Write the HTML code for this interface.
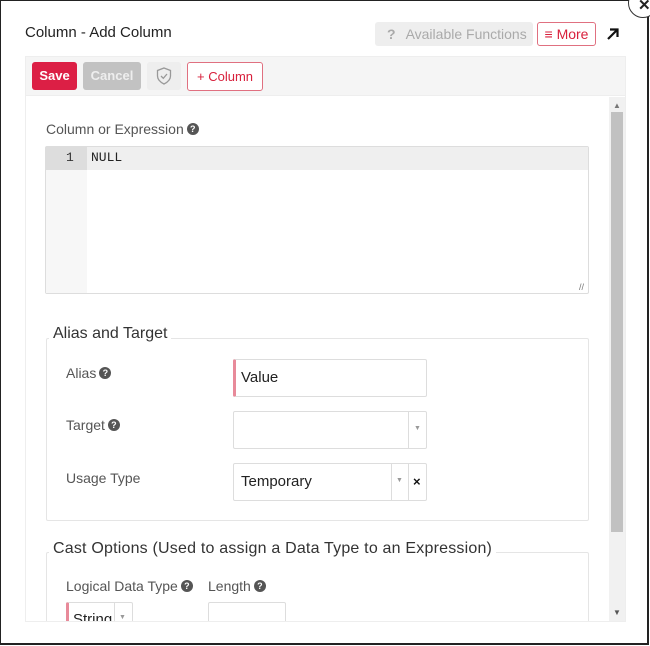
<!DOCTYPE html>
<html><head><style>
*{box-sizing:border-box;margin:0;padding:0}
body{width:650px;height:646px;overflow:hidden;background:#fff;font-family:"Liberation Sans",sans-serif;position:relative}
.a{position:absolute}
.frame{left:0;top:0;width:649px;height:645px;border:1px solid #222;border-right-width:2px;border-bottom-width:2px}
.lbl{color:#555;font-size:14px}
.q{display:inline-block;width:12px;height:12px;border-radius:50%;background:#555;color:#fff;font-size:9px;font-weight:bold;text-align:center;line-height:12px;vertical-align:2px;margin-left:3px}
.inp{border:1px solid #ddd;border-radius:2px;background:#fff}
.leg{background:#fff;padding:0 4px;font-size:16px;color:#333}
</style></head><body>
<div class="a frame"></div>
<div class="a" style="left:628px;top:-12px;width:30px;height:30px;border:1.5px solid #333;border-radius:50%;background:#fff"></div>
<div class="a" style="left:638px;top:-4px;font-size:15px;font-weight:bold;color:#222">✕</div>

<div class="a" style="left:25px;top:24px;font-size:15px;color:#222">Column - Add Column</div>
<div class="a" style="left:375px;top:22px;width:158px;height:24px;background:#eee;border-radius:3px;color:#aaa;font-size:14px;line-height:24px;padding-left:12px"><b style="margin-right:10px">?</b>Available Functions</div>
<div class="a" style="left:537px;top:22px;width:59px;height:24px;border:1px solid #e07080;border-radius:3px;color:#d8203c;font-size:14px;line-height:22px;text-align:center">≡ More</div>
<svg class="a" style="left:606px;top:27px" width="14" height="14" viewBox="0 0 14 14"><path d="M2 12L11 3M4 2.5H11.5V10" stroke="#111" stroke-width="2.2" fill="none"/></svg>

<div class="a" style="left:25px;top:56px;width:601px;height:566px;border:1px solid #eee;background:#fff"></div>
<div class="a" style="left:26px;top:57px;width:599px;height:39px;background:#f5f5f5;border-bottom:1px solid #eee"></div>
<div class="a" style="left:32px;top:62px;width:45px;height:28px;background:#dc1f45;border-radius:3px;color:#fff;font-size:13px;font-weight:bold;line-height:28px;text-align:center">Save</div>
<div class="a" style="left:83px;top:62px;width:58px;height:28px;background:#c2c2c2;border-radius:3px;color:#eee;font-size:13px;font-weight:bold;line-height:28px;text-align:center">Cancel</div>
<div class="a" style="left:147px;top:62px;width:34px;height:28px;background:#eee;border-radius:3px"></div>
<svg class="a" style="left:156px;top:67px" width="16" height="18" viewBox="0 0 16 18"><path d="M8 1L14.5 3.5V9C14.5 13 11 15.5 8 17C5 15.5 1.5 13 1.5 9V3.5Z" fill="none" stroke="#999" stroke-width="1.3"/><path d="M5 9L7.3 11.3L11 7" fill="none" stroke="#999" stroke-width="1.3"/></svg>
<div class="a" style="left:187px;top:62px;width:76px;height:29px;border:1px solid #e07080;border-radius:3px;background:#fff;color:#d8203c;font-size:13px;line-height:27px;text-align:center">+ Column</div>

<div class="a" style="left:609px;top:97px;width:16px;height:524px;background:#f1f1f1"></div>
<div class="a" style="left:611px;top:112px;width:12px;height:420px;background:#c1c1c1"></div>
<div class="a" style="left:613px;top:101px;font-size:8px;color:#777">▲</div>
<div class="a" style="left:613px;top:608px;font-size:8px;color:#555">▼</div>

<div class="a lbl" style="left:46px;top:121px">Column or Expression<span class="q">?</span></div>
<div class="a" style="left:45px;top:146px;width:544px;height:148px;border:1px solid #ddd;border-radius:2px;background:#fff"></div>
<div class="a" style="left:46px;top:147px;width:41px;height:146px;background:#f7f7f7"></div>
<div class="a" style="left:46px;top:147px;width:542px;height:23px;background:#efefef"></div>
<div class="a" style="left:46px;top:147px;width:41px;height:23px;background:#ddd"></div>
<div class="a" style="left:66px;top:150px;font-family:'Liberation Mono',monospace;font-size:13px;color:#333">1</div>
<div class="a" style="left:91px;top:150px;font-family:'Liberation Mono',monospace;font-size:13px;color:#222">NULL</div>
<div class="a" style="left:579px;top:282px;font-size:9px;color:#777">//</div>

<div class="a inp" style="left:46px;top:338px;width:543px;height:183px;border-color:#e5e5e5"></div>
<div class="a leg" style="left:49px;top:325px">Alias and Target</div>
<div class="a lbl" style="left:66px;top:365px">Alias<span class="q">?</span></div>
<div class="a inp" style="left:233px;top:359px;width:194px;height:38px;border-left:3px solid #e88a9a;font-size:15px;line-height:36px;padding-left:5px;color:#222">Value</div>
<div class="a lbl" style="left:66px;top:417px">Target<span class="q">?</span></div>
<div class="a inp" style="left:233px;top:411px;width:194px;height:38px"></div>
<div class="a" style="left:408px;top:412px;width:1px;height:36px;background:#ddd"></div>
<div class="a" style="left:414px;top:425px;font-size:7px;color:#999">▼</div>
<div class="a lbl" style="left:66px;top:470px">Usage Type</div>
<div class="a inp" style="left:233px;top:463px;width:194px;height:38px;font-size:15px;line-height:36px;padding-left:7px;color:#222">Temporary</div>
<div class="a" style="left:391px;top:464px;width:1px;height:36px;background:#ddd"></div>
<div class="a" style="left:408px;top:464px;width:1px;height:36px;background:#ddd"></div>
<div class="a" style="left:396px;top:477px;font-size:7px;color:#999">▼</div>
<div class="a" style="left:413px;top:474px;font-size:13px;font-weight:bold;color:#111">×</div>

<div class="a inp" style="left:46px;top:552px;width:543px;height:80px;border-color:#e5e5e5"></div>
<div class="a leg" style="left:49px;top:540px;letter-spacing:0.2px">Cast Options (Used to assign a Data Type to an Expression)</div>
<div class="a lbl" style="left:66px;top:578px">Logical Data Type<span class="q">?</span></div>
<div class="a lbl" style="left:208px;top:578px">Length<span class="q">?</span></div>
<div class="a inp" style="left:66px;top:602px;width:67px;height:30px;border-left:3px solid #e88a9a;font-size:15px;padding:8px 0 0 4px;color:#222;overflow:hidden">String</div>
<div class="a" style="left:114px;top:603px;width:1px;height:20px;background:#ddd"></div>
<div class="a" style="left:119px;top:614px;font-size:7px;color:#999">▼</div>
<div class="a inp" style="left:208px;top:602px;width:78px;height:30px"></div>
<div class="a" style="left:1px;top:622px;width:646px;height:21px;background:#fff"></div>
<div class="a" style="left:25px;top:621px;width:601px;height:1px;background:#eee"></div>
</body></html>
